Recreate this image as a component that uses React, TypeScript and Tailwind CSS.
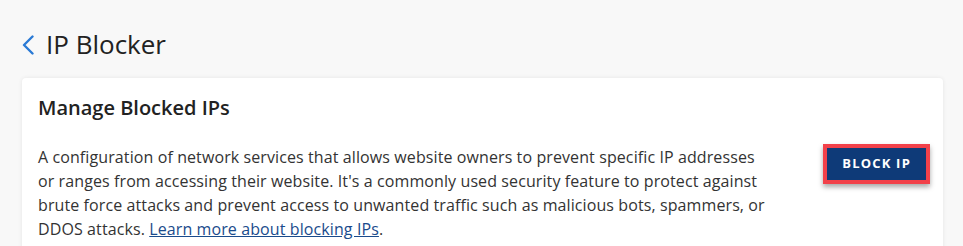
export default function App() {
  return (
    <div
      className="min-h-[246px] bg-[#f8f8f8] pl-[22px] pr-[20px] pt-[26px] text-[#333]"
      style={{ fontFamily: '"Open Sans", "Noto Sans", sans-serif' }}
    >
      <div className="flex items-center gap-[12px]">
        <svg width="12" height="20" viewBox="0 0 12 20" fill="none" className="mt-[2px]">
          <polyline
            points="10.5,1.5 2,10 10.5,18.5"
            stroke="#2a7ad5"
            strokeWidth="2.4"
            strokeLinecap="round"
            strokeLinejoin="round"
          />
        </svg>
        <h1 className="text-[26px] leading-[36px] text-[#222]">IP Blocker</h1>
      </div>

      <div className="mt-[16px] rounded-[4px] bg-white pl-[16px] pr-[13px] pt-[16px] pb-[16px] shadow-[0_0_4px_rgba(0,0,0,0.08)]">
        <h2 className="text-[20px] font-semibold leading-[28px] text-[#222]">Manage Blocked IPs</h2>

        <div className="mt-[23px] flex items-start justify-between">
          <p className="w-[736px] text-[16px] leading-[24px] tracking-[0.1px] text-[#333]">
            A configuration of network services that allows website owners to prevent specific IP addresses or
            ranges from accessing their website. It's a commonly used security feature to protect against brute
            force attacks and prevent access to unwanted traffic such as malicious bots, spammers, or DDOS attacks.{" "}
            <a href="#" className="text-[#1a4b8c] underline">
              Learn more about blocking IPs
            </a>
            .
          </p>

          <button className="-mt-[1px] border-[4px] border-[#f2414a] bg-[#0e3a78] px-[15px] py-[6px] text-[13px] font-bold tracking-[1.2px] text-white shadow-[0_3px_5px_rgba(0,0,0,0.35)]">
            BLOCK IP
          </button>
        </div>
      </div>
    </div>
  );
}
